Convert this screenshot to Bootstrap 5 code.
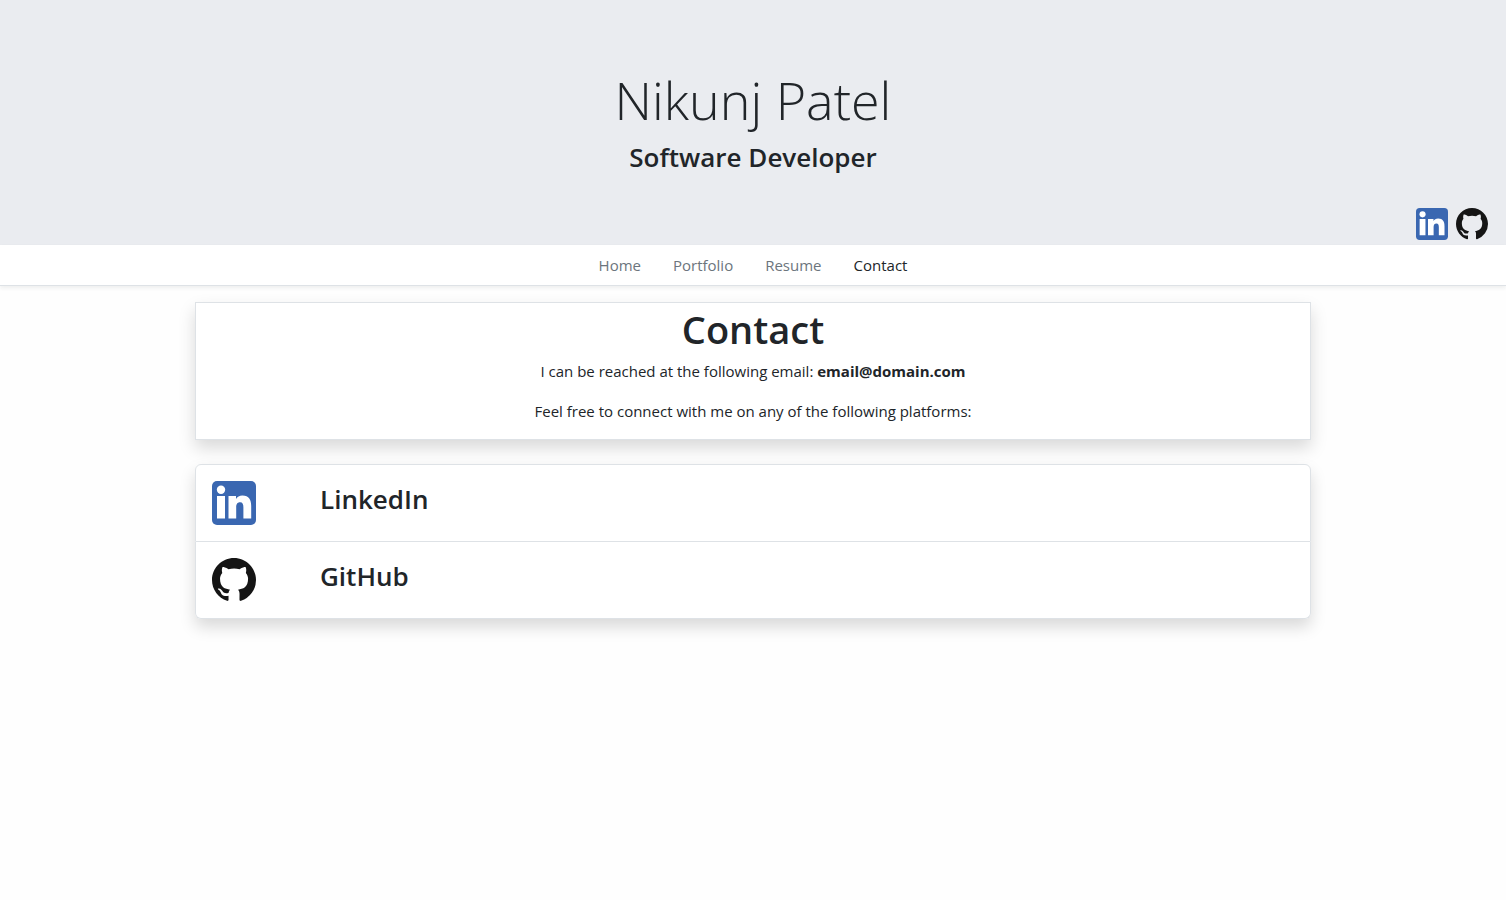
<!DOCTYPE html>
<html lang="en">
<head>
<meta charset="utf-8">
<meta name="viewport" content="width=device-width, initial-scale=1">
<title>Nikunj Patel - Contact</title>
<link href="https://cdn.jsdelivr.net/npm/bootstrap@5.3.0/dist/css/bootstrap.min.css" rel="stylesheet">
<style>
  body { font-family: "Open Sans", "Noto Sans", sans-serif; font-size: 15px; line-height: 24px; background: #fefefe; }
  .site-header { background: #eaecf0; padding: 66px 14px 5px; }
  .site-name { font-size: 52px; font-weight: 300; line-height: 68px; }
  .site-role, .platform-name { font-size: 26px; font-weight: 600; }
  .site-role { line-height: 38px; }
  .platform-name { line-height: 36px; }
  .page-title { font-size: 38px; font-weight: 600; line-height: 52px; }
  .site-nav .nav-link { padding: 8px 16px; color: #6c757d; }
  .site-nav .nav-link.active { color: #212529; }
  .page-body { max-width: 1140px; }
  .social-icon { width: 32px; height: 32px; display: block; }
  .platform-icon { width: 44px; height: 44px; display: block; }
  .soft-shadow { box-shadow: 0 8px 16px rgba(0, 0, 0, .15); }
</style>
</head>
<body>
<svg class="d-none" aria-hidden="true">
  <symbol id="linkedin" viewBox="0 0 44 44">
    <rect width="44" height="44" rx="5" fill="#3a67b1"/>
    <circle cx="9" cy="8.700" r="4.200" fill="#fff"/>
    <path fill="#fff" d="M5 15h8v22.500H5zM16.500 15H24v3c1.300-2.200 3.400-3.500 6.400-3.500 6.700 0 8.800 4.400 8.800 10.600v12.400h-7.800V26.500c0-3.200-.7-5.200-3.300-5.200-3 0-3.900 2.100-3.900 5.200v11h-7.700z"/>
  </symbol>
  <symbol id="github" viewBox="0 0 16 16">
    <path fill="#151515" d="M8 0C3.580 0 0 3.580 0 8c0 3.540 2.290 6.530 5.470 7.590.4.070.55-.17.55-.38 0-.19-.01-.82-.01-1.490-2.010.37-2.530-.49-2.690-.94-.09-.23-.48-.94-.82-1.130-.28-.15-.68-.52-.01-.53.63-.01 1.080.58 1.230.82.72 1.210 1.870.87 2.330.66.070-.52.28-.87.51-1.070-1.780-.2-3.640-.89-3.640-3.950 0-.87.31-1.590.82-2.150-.08-.2-.36-1.020.080-2.120 0 0 .67-.21 2.200.82.64-.18 1.320-.27 2-.27s1.360.09 2 .27c1.530-1.040 2.200-.82 2.200-.82.44 1.100.16 1.920.080 2.120.51.56.82 1.270.82 2.150 0 3.070-1.870 3.750-3.650 3.950.29.25.54.73.54 1.480 0 1.070-.01 1.930-.01 2.200 0 .21.15.46.55.38A8.010 8.010 0 0 0 16 8c0-4.420-3.580-8-8-8z"/>
  </symbol>
</svg>

<header class="site-header text-center">
  <h1 class="site-name mb-1">Nikunj Patel</h1>
  <h2 class="site-role mb-0">Software Developer</h2>
  <div class="d-flex justify-content-end gap-2 pt-4 mt-2">
    <a href="#" aria-label="LinkedIn"><svg class="social-icon"><use href="#linkedin"/></svg></a>
    <a href="#" aria-label="GitHub" class="me-1"><svg class="social-icon"><use href="#github"/></svg></a>
  </div>
</header>

<nav class="site-nav nav justify-content-center bg-white border-bottom shadow-sm">
  <a class="nav-link" href="#">Home</a>
  <a class="nav-link" href="#">Portfolio</a>
  <a class="nav-link" href="#">Resume</a>
  <a class="nav-link active" href="#" aria-current="page">Contact</a>
</nav>

<main class="page-body container-fluid pt-3 pb-5">
  <section class="bg-white border soft-shadow text-center pb-3 mb-4">
    <h1 class="page-title mb-1">Contact</h1>
    <p class="mb-3">I can be reached at the following email: <strong>email@domain.com</strong></p>
    <p class="mb-0">Feel free to connect with me on any of the following platforms:</p>
  </section>
  <div class="list-group soft-shadow">
    <a class="list-group-item list-group-item-action d-flex p-3" href="#">
      <svg class="platform-icon me-5" aria-hidden="true"><use href="#linkedin"/></svg>
      <h3 class="platform-name ms-3 mb-0">LinkedIn</h3>
    </a>
    <a class="list-group-item list-group-item-action d-flex p-3" href="#">
      <svg class="platform-icon me-5" aria-hidden="true"><use href="#github"/></svg>
      <h3 class="platform-name ms-3 mb-0">GitHub</h3>
    </a>
  </div>
</main>
<script src="https://cdn.jsdelivr.net/npm/bootstrap@5.3.0/dist/js/bootstrap.bundle.min.js"></script>
</body>
</html>
